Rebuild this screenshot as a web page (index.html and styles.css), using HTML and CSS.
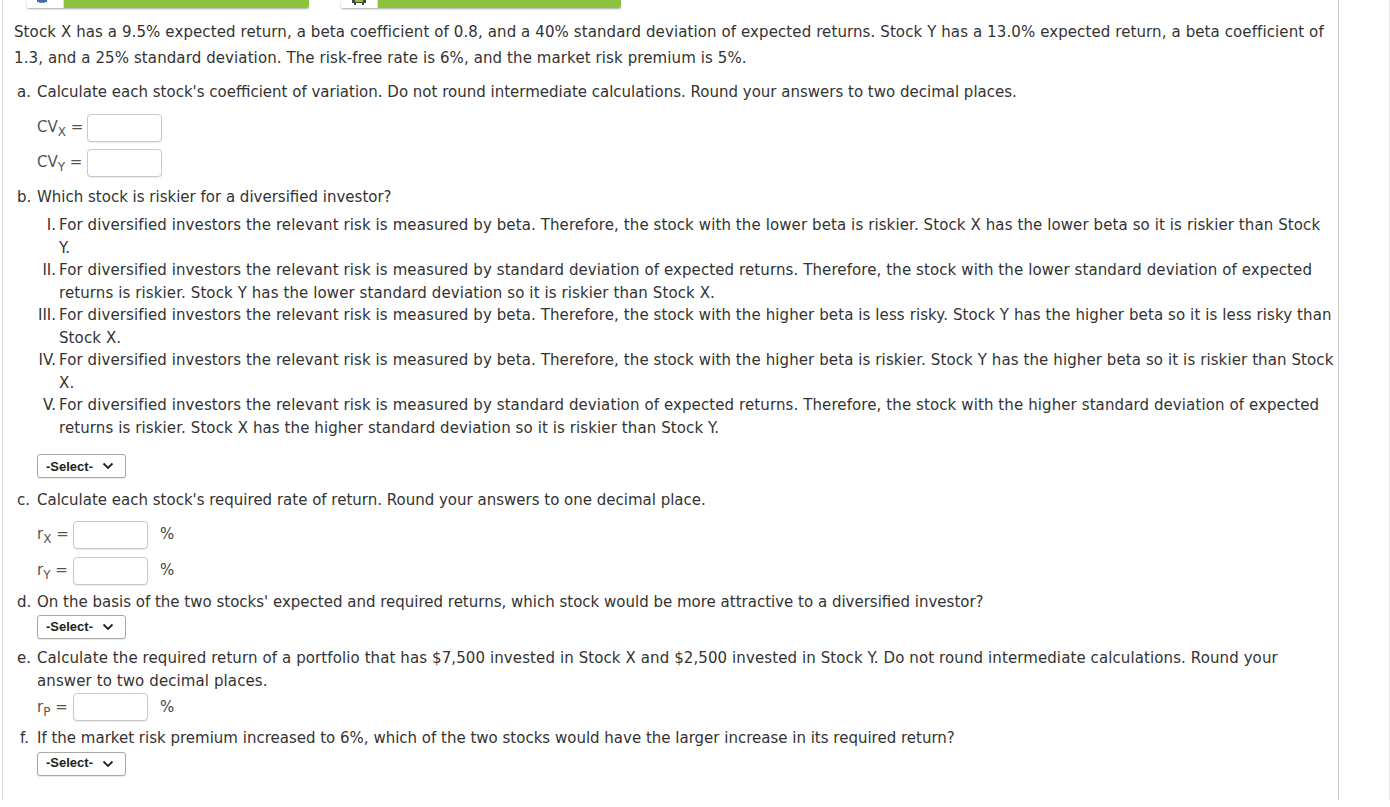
FILE: index.html
```html
<!DOCTYPE html>
<html>
<head>
<meta charset="utf-8">
<link rel="stylesheet" href="styles.css">
</head>
<body>
<div class="page">
  <div class="toolbar">
    <div class="tbtn">
      <div class="ticon"><svg width="36" height="8" viewBox="0 0 36 8"><rect x="10" y="0" width="10" height="2" fill="#3d6fa6"/><rect x="12" y="2" width="6" height="1" fill="#6b8fb8"/></svg></div>
      <div class="tgreen"></div>
    </div>
    <div class="tbtn">
      <div class="ticon"><svg width="36" height="8" viewBox="0 0 36 8"><rect x="11" y="0" width="14" height="3" fill="#444"/><rect x="13" y="3" width="2" height="2" fill="#444"/><rect x="21" y="3" width="2" height="2" fill="#444"/><rect x="14" y="0" width="8" height="2" fill="#8cbf3a"/></svg></div>
      <div class="tgreen"></div>
    </div>
  </div>

  <p class="intro">Stock X has a 9.5% expected return, a beta coefficient of 0.8, and a 40% standard deviation of expected returns. Stock Y has a 13.0% expected return, a beta coefficient of<br>1.3, and a 25% standard deviation. The risk-free rate is 6%, and the market risk premium is 5%.</p>

  <div class="q q-a">
    <span class="ql">a.</span>
    <div class="qb">
      <div class="qt">Calculate each stock's coefficient of variation. Do not round intermediate calculations. Round your answers to two decimal places.</div>
      <div class="row row-first"><span class="lab lab-cv">CV<sub>X</sub> =</span><span class="inp"></span></div>
      <div class="row row-next"><span class="lab lab-cv">CV<sub>Y</sub> =</span><span class="inp"></span></div>
    </div>
  </div>

  <div class="q q-b">
    <span class="ql">b.</span>
    <div class="qb">
      <div class="qt">Which stock is riskier for a diversified investor?</div>
    </div>
  </div>
  <ol class="opts">
    <li><span class="num">I.</span><span class="otext">For diversified investors the relevant risk is measured by beta. Therefore, the stock with the lower beta is riskier. Stock X has the lower beta so it is riskier than Stock<br>Y.</span></li>
    <li><span class="num">II.</span><span class="otext">For diversified investors the relevant risk is measured by standard deviation of expected returns. Therefore, the stock with the lower standard deviation of expected<br>returns is riskier. Stock Y has the lower standard deviation so it is riskier than Stock X.</span></li>
    <li><span class="num">III.</span><span class="otext">For diversified investors the relevant risk is measured by beta. Therefore, the stock with the higher beta is less risky. Stock Y has the higher beta so it is less risky than<br>Stock X.</span></li>
    <li><span class="num">IV.</span><span class="otext">For diversified investors the relevant risk is measured by beta. Therefore, the stock with the higher beta is riskier. Stock Y has the higher beta so it is riskier than Stock<br>X.</span></li>
    <li><span class="num">V.</span><span class="otext">For diversified investors the relevant risk is measured by standard deviation of expected returns. Therefore, the stock with the higher standard deviation of expected<br>returns is riskier. Stock X has the higher standard deviation so it is riskier than Stock Y.</span></li>
  </ol>
  <div class="sel sel-b"><span>-Select-</span><svg width="12" height="8" viewBox="0 0 12 8"><path d="M1.5 1.5 L6 6 L10.5 1.5" fill="none" stroke="#222" stroke-width="1.8"/></svg></div>

  <div class="q q-c">
    <span class="ql">c.</span>
    <div class="qb">
      <div class="qt">Calculate each stock's required rate of return. Round your answers to one decimal place.</div>
      <div class="row row-c1"><span class="lab lab-r">r<sub>X</sub> =</span><span class="inp"></span><span class="pct">%</span></div>
      <div class="row row-c2"><span class="lab lab-r">r<sub>Y</sub> =</span><span class="inp"></span><span class="pct">%</span></div>
    </div>
  </div>

  <div class="q q-d">
    <span class="ql">d.</span>
    <div class="qb">
      <div class="qt">On the basis of the two stocks' expected and required returns, which stock would be more attractive to a diversified investor?</div>
      <div class="sel sel-in"><span>-Select-</span><svg width="12" height="8" viewBox="0 0 12 8"><path d="M1.5 1.5 L6 6 L10.5 1.5" fill="none" stroke="#222" stroke-width="1.8"/></svg></div>
    </div>
  </div>

  <div class="q q-e">
    <span class="ql">e.</span>
    <div class="qb">
      <div class="qt">Calculate the required return of a portfolio that has $7,500 invested in Stock X and $2,500 invested in Stock Y. Do not round intermediate calculations. Round your<br>answer to two decimal places.</div>
      <div class="row row-e"><span class="lab lab-r">r<sub>P</sub> =</span><span class="inp"></span><span class="pct">%</span></div>
    </div>
  </div>

  <div class="q q-f">
    <span class="ql">f.</span>
    <div class="qb">
      <div class="qt">If the market risk premium increased to 6%, which of the two stocks would have the larger increase in its required return?</div>
      <div class="sel sel-in"><span>-Select-</span><svg width="12" height="8" viewBox="0 0 12 8"><path d="M1.5 1.5 L6 6 L10.5 1.5" fill="none" stroke="#222" stroke-width="1.8"/></svg></div>
    </div>
  </div>
</div>
<div class="edge"></div>
</body>
</html>
```

FILE: styles.css
```css
html, body {
  margin: 0;
  padding: 0;
  background: #fff;
}
body {
  font-family: "DejaVu Sans", Verdana, sans-serif;
  font-size: 15px;
  color: #333;
  overflow: hidden;
  height: 807px;
  position: relative;
}
.page {
  margin-left: 2px;
  width: 1322px;
  height: 800px;
  border-left: 1px solid #d6d6d6;
  border-right: 1px solid #c8c8c8;
  padding: 0 2px 0 11px;
}
.edge {
  position: absolute;
  top: 0;
  right: 0;
  width: 1px;
  height: 800px;
  background: #e6e6e6;
}
.toolbar {
  display: flex;
  gap: 32px;
  padding-left: 13px;
  height: 19px;
}
.tbtn {
  display: flex;
  width: 282px;
  height: 8px;
  box-shadow: 0 1px 2px rgba(0,0,0,0.35);
  border-radius: 0 0 2px 2px;
  overflow: hidden;
}
.tbtn + .tbtn { width: 280px; }
.ticon {
  width: 36px;
  background: #fff;
  border-right: 1px solid #e0e0e0;
}
.ticon svg { display: block; }
.tgreen {
  flex: 1;
  background: #8dc33c;
}
.intro {
  margin: 0;
  line-height: 26px;
  letter-spacing: 0.1px;
  white-space: nowrap;
}
.q {
  display: flex;
  line-height: 22.5px;
}
.ql {
  width: 23px;
  text-align: left;
  padding-left: 3px;
  box-sizing: border-box;
  flex: none;
}
.q-f .ql { padding-left: 6px; }
.qb { flex: 1; }
.q-a { margin-top: 10px; }
.q-b { margin-top: 9px; }
.q-c { margin-top: 11px; }
.q-d { margin-top: 6px; }
.q-e { margin-top: 8px; }
.q-e .qt { letter-spacing: 0.1px; }
.q-f { margin-top: 6px; }
.row {
  display: flex;
  align-items: center;
  height: 28px;
}
.row-first { margin-top: 10px; }
.row-next { margin-top: 7px; }
.row-c1 { margin-top: 9px; }
.row-c2 { margin-top: 8px; }
.row-e { margin-top: 1px; }
.lab {
  color: #555;
  white-space: nowrap;
}
.lab sub {
  font-size: 12px;
  vertical-align: -4px;
  line-height: 0;
}
.lab-cv { width: 50px; }
.lab-r { width: 36px; }
.inp {
  width: 73px;
  height: 26px;
  border: 1px solid #c9c9c9;
  border-radius: 4px;
  box-shadow: 0 1px 1px rgba(0,0,0,0.08);
  background: #fff;
}
.pct {
  margin-left: 12px;
  color: #444;
}
.opts {
  list-style: none;
  margin: 6px 0 0 0;
  padding: 0;
  line-height: 22.5px;
}
.opts li {
  display: flex;
}
.num {
  width: 42px;
  text-align: right;
  padding-right: 3px;
  flex: none;
}
.otext {
  flex: 1;
  letter-spacing: 0.1px;
  white-space: nowrap;
}
.sel {
  display: inline-flex;
  align-items: center;
  gap: 9px;
  box-sizing: border-box;
  width: 89px;
  height: 24px;
  padding-left: 8px;
  border: 1px solid #a8a8a8;
  border-radius: 3px;
  font-family: "Liberation Sans", Arial, sans-serif;
  font-weight: bold;
  font-size: 13px;
  color: #222;
  background: #fff;
  box-shadow: 0 1px 1px rgba(0,0,0,0.1);
  vertical-align: top;
}
.sel svg { display: block; }
.sel-b {
  margin: 15px 0 0 23px;
  display: flex;
}
.sel-in {
  display: flex;
  margin-top: 2px;
}
```
